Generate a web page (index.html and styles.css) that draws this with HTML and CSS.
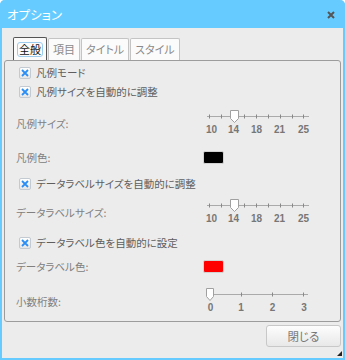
FILE: index.html
```
<!DOCTYPE html>
<html lang="ja">
<head>
	<meta charset="UTF-8">
	<title>オプション</title>
	<link rel="stylesheet" href="styles.css">
</head>
<body>
	<div class="window">
		<div class="titlebar">
			<span class="title">オプション</span>
			<svg class="close" width="8" height="8" viewBox="0 0 8 8"><path d="M1 1 L7 7 M7 1 L1 7" /></svg>
		</div>
		<div class="body">
			<div class="tabs">
				<span class="tab on"><span class="focus">全般</span></span>
				<span class="tab">項目</span>
				<span class="tab">タイトル</span>
				<span class="tab">スタイル</span>
			</div>
			<div class="panel">
				<label class="check">
					<span class="box"><svg width="10" height="10" viewBox="0 0 10 10"><path d="M2 2 L8 8 M8 2 L2 8" /></svg></span>
					凡例モード
				</label>
				<label class="check">
					<span class="box"><svg width="10" height="10" viewBox="0 0 10 10"><path d="M2 2 L8 8 M8 2 L2 8" /></svg></span>
					凡例サイズを自動的に調整
				</label>
				<div class="field mt-9">
					<span class="name">凡例サイズ:</span>
					<svg class="slider" width="112" height="26" viewBox="0 0 112 26">
						<line class="track" x1="4" y1="6.5" x2="106" y2="6.5" />
						<path class="ticks" d="M6.5 4.5v4 M18.5 4.5v4 M41.5 4.5v4 M53.5 4.5v4 M65.5 4.5v4 M77.5 4.5v4 M89.5 4.5v4 M100.5 4.5v4" />
						<path class="thumb" d="M27.5 0.5 h8 v8 l-4 4 l-4 -4 z" />
						<text class="num" x="8.5" y="23">10</text>
						<text class="num" x="30.5" y="23">14</text>
						<text class="num" x="53.5" y="23">18</text>
						<text class="num" x="76.5" y="23">21</text>
						<text class="num" x="100.5" y="23">25</text>
					</svg>
				</div>
				<div class="field mt-8">
					<span class="name">凡例色:</span>
					<span class="swatch black"></span>
				</div>
				<label class="check mt-4">
					<span class="box"><svg width="10" height="10" viewBox="0 0 10 10"><path d="M2 2 L8 8 M8 2 L2 8" /></svg></span>
					データラベルサイズを自動的に調整
				</label>
				<div class="field mt-6">
					<span class="name">データラベルサイズ:</span>
					<svg class="slider" width="112" height="26" viewBox="0 0 112 26">
						<line class="track" x1="4" y1="6.5" x2="106" y2="6.5" />
						<path class="ticks" d="M6.5 4.5v4 M18.5 4.5v4 M41.5 4.5v4 M53.5 4.5v4 M65.5 4.5v4 M77.5 4.5v4 M89.5 4.5v4 M100.5 4.5v4" />
						<path class="thumb" d="M27.5 0.5 h8 v8 l-4 4 l-4 -4 z" />
						<text class="num" x="8.5" y="23">10</text>
						<text class="num" x="30.5" y="23">14</text>
						<text class="num" x="53.5" y="23">18</text>
						<text class="num" x="76.5" y="23">21</text>
						<text class="num" x="100.5" y="23">25</text>
					</svg>
				</div>
				<label class="check mt-8">
					<span class="box"><svg width="10" height="10" viewBox="0 0 10 10"><path d="M2 2 L8 8 M8 2 L2 8" /></svg></span>
					データラベル色を自動的に設定
				</label>
				<div class="field mt-1">
					<span class="name">データラベル色:</span>
					<span class="swatch red"></span>
				</div>
				<div class="field mt-9">
					<span class="name">小数桁数:</span>
					<svg class="slider" width="112" height="26" viewBox="0 0 112 26">
						<line class="track" x1="8" y1="6.5" x2="105" y2="6.5" />
						<path class="ticks" d="M38.5 4.5v4 M69.5 4.5v4 M100.5 4.5v4" />
						<path class="thumb" d="M3.5 0.5 h7 v8 l-3.5 4 l-3.5 -4 z" />
						<text class="num" x="7.5" y="23">0</text>
						<text class="num" x="38" y="23">1</text>
						<text class="num" x="69.5" y="23">2</text>
						<text class="num" x="101" y="23">3</text>
					</svg>
				</div>
			</div>
			<div class="footer">
				<button class="btn">閉じる</button>
			</div>
		</div>
		<span class="grip"></span>
	</div>
</body>
</html>
```

FILE: styles.css
```
* {
	margin: 0;
	padding: 0;
}
body {
	font-family: "Noto Sans CJK JP", "Noto Sans", sans-serif;
	font-feature-settings: "palt";
	font-size: 10.5px;
	background: #fff;
}
.window {
	position: relative;
	width: 345px;
	height: 360px;
	box-sizing: border-box;
	border: 2px solid #66ccff;
	border-top: none;
	border-radius: 5px 5px 0 0;
	background: #ececec;
	display: flex;
	flex-direction: column;
}
.titlebar {
	height: 28px;
	margin: 0 -2px;
	padding: 0 10px 0 7px;
	background: #66ccff;
	border-radius: 5px 5px 0 0;
	display: flex;
	align-items: center;
	justify-content: space-between;
}
.title {
	color: #fff;
	font-size: 12.5px;
	line-height: 1;
	padding-top: 2px;
}
.close {
	margin-top: 1px;
}
.close path {
	stroke: #555;
	stroke-width: 2;
}
.body {
	flex: 1;
	padding: 9px 2px 0;
	display: flex;
	flex-direction: column;
}
.tabs {
	display: flex;
	align-items: flex-end;
	gap: 1px;
	height: 23px;
	padding-left: 9px;
}
.tab {
	height: 22px;
	box-sizing: border-box;
	padding: 0 4px;
	border: 1px solid #c4c4c4;
	border-bottom: none;
	border-radius: 2px 2px 0 0;
	background: #fbfbfb;
	color: #8a8a8a;
	font-size: 11px;
	line-height: 21px;
}
.tab.on {
	height: 23px;
	padding: 0 3px;
	border-color: #555;
	color: #111;
	display: flex;
	align-items: center;
}
.focus {
	border: 1px solid #9ccbee;
	border-radius: 3px;
	padding: 0 1px;
	line-height: 12px;
	height: 13px;
}
.panel {
	border: 1px solid #9c9c9c;
	border-radius: 3px;
	padding: 2px 0 7px;
	display: flex;
	flex-direction: column;
}
.check {
	height: 19px;
	padding-left: 14px;
	display: flex;
	align-items: center;
	color: #5e5e5e;
}
.box {
	width: 10px;
	height: 10px;
	margin-right: 5px;
	border: 1px solid #c3cad2;
	border-radius: 2px;
	background: linear-gradient(#ffffff, #e6e6e6);
	display: flex;
}
.box path {
	stroke: #2a8ef5;
	stroke-width: 1.8;
	fill: none;
}
.field {
	height: 26px;
	padding-left: 11px;
	display: flex;
	align-items: center;
	color: #808080;
}
.name {
	width: 187px;
}
.slider .track {
	stroke: #aaa;
	stroke-width: 1;
}
.slider .ticks {
	stroke: #888;
	stroke-width: 1;
}
.slider .thumb {
	fill: #fff;
	stroke: #a0a0a0;
	stroke-width: 1;
}
.slider .num {
	fill: #777;
	font-family: "Liberation Sans", Arial, sans-serif;
	font-size: 10px;
	font-weight: bold;
	text-anchor: middle;
}
.swatch {
	width: 19px;
	height: 11px;
	border: 1px solid #d2d2d2;
	border-radius: 2px;
}
.black {
	background: #000;
}
.red {
	background: #f00;
}
.mt-1 { margin-top: 1px; }
.mt-4 { margin-top: 4px; }
.mt-6 { margin-top: 6px; }
.mt-8 { margin-top: 8px; }
.mt-9 { margin-top: 9px; }
.footer {
	display: flex;
	justify-content: flex-end;
	padding-top: 3px;
}
.btn {
	width: 75px;
	height: 22px;
	border: 1px solid #c8c8c8;
	border-radius: 3px;
	background: linear-gradient(#fdfdfd, #e8e8e8);
	color: #777;
	font-family: "Noto Sans CJK JP", sans-serif;
	font-feature-settings: "palt";
	font-size: 11.5px;
}
.grip {
	position: absolute;
	right: 1px;
	bottom: 2px;
	width: 0;
	height: 0;
	border-left: 5px solid transparent;
	border-bottom: 5px solid #222;
}
```
